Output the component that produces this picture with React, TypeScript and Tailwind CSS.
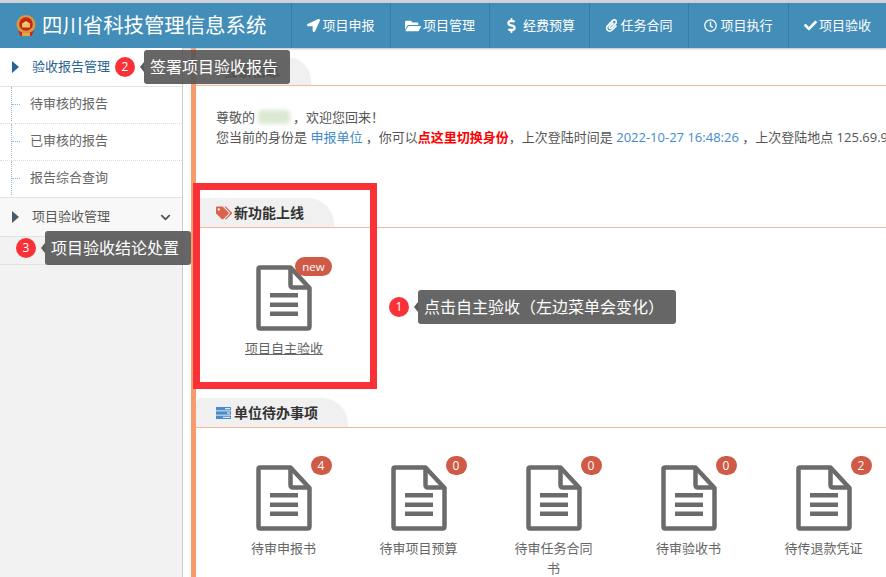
import React from "react";
import { FaLocationArrow, FaFolderOpen, FaDollarSign, FaPaperclip, FaRegClock, FaCheck, FaTags, FaChevronDown } from "react-icons/fa";

const font = { fontFamily: '"Open Sans","Noto Sans CJK SC",sans-serif' };

function DocIcon() {
  return (
    <svg width="56" height="66" viewBox="0 0 56 66" className="block">
      <path d="M4 2.5H34.5L53.5 23V61.5Q53.5 63.5 51.5 63.5H4Q2.5 63.5 2.5 61.5V4Q2.5 2.5 4 2.5Z" fill="#fff" stroke="#6b6b6b" strokeWidth="4.5" strokeLinejoin="round" />
      <path d="M34.5 2.5V20Q34.5 22.5 37 22.5H53.5" fill="none" stroke="#6b6b6b" strokeWidth="4.5" />
      <rect x="14" y="28" width="28" height="4.5" fill="#6b6b6b" />
      <rect x="14" y="37.5" width="28" height="4.5" fill="#6b6b6b" />
      <rect x="14" y="46.5" width="28" height="4.5" fill="#6b6b6b" />
    </svg>
  );
}

function Emblem() {
  return (
    <svg width="20" height="22" viewBox="0 0 20 22" className="shrink-0">
      <circle cx="10" cy="9.5" r="9.5" fill="#d9983c" />
      <circle cx="10" cy="9" r="6.8" fill="#c8261c" />
      <rect x="6" y="9" width="8" height="3.5" fill="#ecc35c" />
      <path d="M5.5 9L10 6L14.5 9Z" fill="#f0d070" />
      <path d="M2 15.5Q10 21 18 15.5L15.5 21H4.5Z" fill="#c8261c" />
      <rect x="6" y="18" width="8" height="3" fill="#e0a83e" />
    </svg>
  );
}

function Caret({ color }: { color: string }) {
  return (
    <svg width="7" height="12" viewBox="0 0 7 12" className="shrink-0">
      <path d="M0 0L7 6L0 12Z" fill={color} />
    </svg>
  );
}

function Nav({ icon, label, w }: { icon: React.ReactNode; label: string; w: string }) {
  return (
    <div className={`flex items-center justify-center gap-[2px] border-l border-[#357ba3] text-[13px] text-white ${w}`}>
      {icon}
      <span>{label}</span>
    </div>
  );
}

function SectionTab({ icon, label, w }: { icon: React.ReactNode; label: string; w: string }) {
  return (
    <div className="h-[30px] border-b border-[#f9b79c]">
      <div className={`flex h-[29px] items-center gap-[2px] rounded-tr-[26px] rounded-tl-[6px] bg-[#f0f0f0] pl-[20px] text-[14px] leading-none font-bold text-[#333] ${w}`}>
        {icon}
        <span>{label}</span>
      </div>
    </div>
  );
}

function Card({ label, badge }: { label: string; badge: string }) {
  return (
    <div className="flex w-[135px] shrink-0 flex-col items-center">
      <div className="relative">
        <DocIcon />
        <span className="absolute top-[-9px] right-[-20px] flex h-[19px] w-[21px] items-center justify-center rounded-full bg-[#cf5a45] text-[12px] text-white">{badge}</span>
      </div>
      <div className="mt-[7px] w-[80px] text-center text-[13px] leading-[20px] text-[#666]">{label}</div>
    </div>
  );
}

function Tip({ n, label, className }: { n: string; label: string; className: string }) {
  return (
    <div className={`absolute z-20 flex items-center ${className}`}>
      <span className="flex h-[20px] w-[20px] shrink-0 items-center justify-center rounded-full bg-[#fb3138] text-[12px] text-white">{n}</span>
      <span className="ml-[5px] h-0 w-0 border-y-[5px] border-r-[4px] border-y-transparent border-r-[#5a5a5a]" />
      <span className="flex h-[34px] items-center rounded-[3px] bg-[#555]/90 pr-[12px] pl-[6px] text-[16px] whitespace-nowrap text-white">{label}</span>
    </div>
  );
}

export default function App() {
  return (
    <div className="relative flex h-[577px] w-[886px] flex-col overflow-hidden bg-white" style={font}>
      <div className="h-[3px] shrink-0 bg-[#cfd3d6]" />
      <header className="flex h-[45px] shrink-0 bg-[#438eb9] shadow-[0_1px_2px_rgba(0,0,0,0.25)]">
        <div className="flex w-[291px] items-center gap-[6px] pl-[16px] text-[20.4px] text-white">
          <Emblem />
          <span className="whitespace-nowrap">四川省科技管理信息系统</span>
        </div>
        <Nav w="w-[99px]" label="项目申报" icon={<FaLocationArrow className="text-[13px]" />} />
        <Nav w="w-[99px]" label="项目管理" icon={<FaFolderOpen className="text-[16px]" />} />
        <Nav w="w-[100px]" label="经费预算" icon={<FaDollarSign className="mr-[2px] text-[15px]" />} />
        <Nav w="w-[99px]" label="任务合同" icon={<FaPaperclip className="text-[13px]" />} />
        <Nav w="w-[100px]" label="项目执行" icon={<FaRegClock className="mr-px text-[13px]" />} />
        <Nav w="w-[98px]" label="项目验收" icon={<FaCheck className="text-[13px]" />} />
      </header>
      <div className="flex min-h-0 flex-1">
        <aside className="w-[183px] shrink-0 border-r border-[#ccc] bg-[#f2f2f2] text-[13px]">
          <div className="flex h-[39px] items-center border-b border-[#e2e2e2] bg-white pl-[12px] text-[#2a6496]">
            <Caret color="#2a6496" />
            <span className="ml-[13px]">验收报告管理</span>
          </div>
          <div className="bg-white text-[#666]">
            {["待审核的报告", "已审核的报告", "报告综合查询"].map((t, i) => (
              <div key={t} className={`flex items-center pb-[2px] ${i < 2 ? "h-[37px] border-b border-dotted border-[#dcdcdc]" : "h-[36px]"}`}>
                <div className="ml-[11px] flex h-full items-center self-stretch border-l border-dotted border-[#9cb8d0]">
                  <span className="h-0 w-[8px] border-t border-dotted border-[#9cb8d0]" />
                </div>
                <span className="ml-[10px]">{t}</span>
              </div>
            ))}
          </div>
          <div className="flex h-[40px] items-center justify-between border-y border-[#e2e2e2] bg-[#f8f8f8] pr-[11px] pl-[12px] text-[#585858]">
            <span className="flex items-center">
              <Caret color="#4a5a6a" />
              <span className="ml-[13px]">项目验收管理</span>
            </span>
            <FaChevronDown className="text-[11px] text-[#555]" />
          </div>
          <div className="h-[28px] border-b border-[#e2e2e2]" />
        </aside>
        <main className="relative min-w-0 flex-1 pl-[8px]">
          <div className="h-full border-l-[5px] border-[#f79a6c]">
            <div className="h-[38px] border-b border-[#f9b79c] pt-[9px]">
              <div className="flex h-[28px] w-[115px] items-center rounded-tr-[24px] bg-[#f0f0f0] pl-[28px] text-[14px] leading-none font-bold text-[#333]">
                <span>登录信息</span>
              </div>
            </div>
            <div className="h-[112px] pt-[21px] pl-[20px] text-[13px] leading-[21px] whitespace-nowrap text-[#555]">
              <div className="flex h-[20px] items-center">
                尊敬的
                <span className="mx-[3px] inline-block h-[14px] w-[32px] rounded bg-[#dbe8d3] blur-[2px]" />
                ，欢迎您回来！
              </div>
              <div>
                您当前的身份是 <span className="text-[#428bca]">申报单位</span> ，你可以<span className="font-bold text-[#ff0000]">点这里切换身份</span>，上次登陆时间是 <span className="text-[#428bca]">2022-10-27 16:48:26</span> ，上次登陆地点 125.69.9
              </div>
            </div>
            <SectionTab w="w-[138px]" icon={<FaTags className="text-[16px] text-[#d9634c]" />} label="新功能上线" />
            <div className="h-[170px] pt-[37px] pl-[60px]">
              <div className="flex w-[56px] flex-col items-center">
                <div className="relative">
                  <DocIcon />
                  <span className="absolute top-[-8px] right-[-20px] flex h-[19px] w-[37px] items-center justify-center rounded-full bg-[#cf5a45] text-[11.5px] text-white">new</span>
                </div>
                <span className="mt-[7px] text-[13px] leading-[20px] whitespace-nowrap text-[#666] underline">项目自主验收</span>
              </div>
            </div>
            <SectionTab
              w="w-[152px]"
              icon={
                <svg width="15" height="12" viewBox="0 0 15 12" className="mr-px">
                  <rect width="15" height="3.4" fill="#4a8ccb" />
                  <rect y="4.3" width="15" height="3.4" fill="#4a8ccb" />
                  <rect y="8.6" width="15" height="3.4" fill="#4a8ccb" />
                  <rect x="9" y="1.2" width="5" height="1" fill="#fff" />
                  <rect x="11" y="5.5" width="3" height="1" fill="#fff" />
                  <rect x="7" y="9.8" width="7" height="1" fill="#fff" />
                </svg>
              }
              label="单位待办事项"
            />
            <div className="flex pt-[37px] pl-[20px]">
              <Card label="待审申报书" badge="4" />
              <Card label="待审项目预算" badge="0" />
              <Card label="待审任务合同书" badge="0" />
              <Card label="待审验收书" badge="0" />
              <Card label="待传退款凭证" badge="2" />
            </div>
          </div>
        </main>
      </div>
      <div className="pointer-events-none absolute top-[183px] left-[193px] z-10 h-[206px] w-[184px] border-[7px] border-[#fb3138]" />
      <Tip n="2" label="签署项目验收报告" className="top-[50px] left-[115px]" />
      <Tip n="3" label="项目验收结论处置" className="top-[231px] left-[16px]" />
      <Tip n="1" label="点击自主验收（左边菜单会变化）" className="top-[290px] left-[389px]" />
    </div>
  );
}
